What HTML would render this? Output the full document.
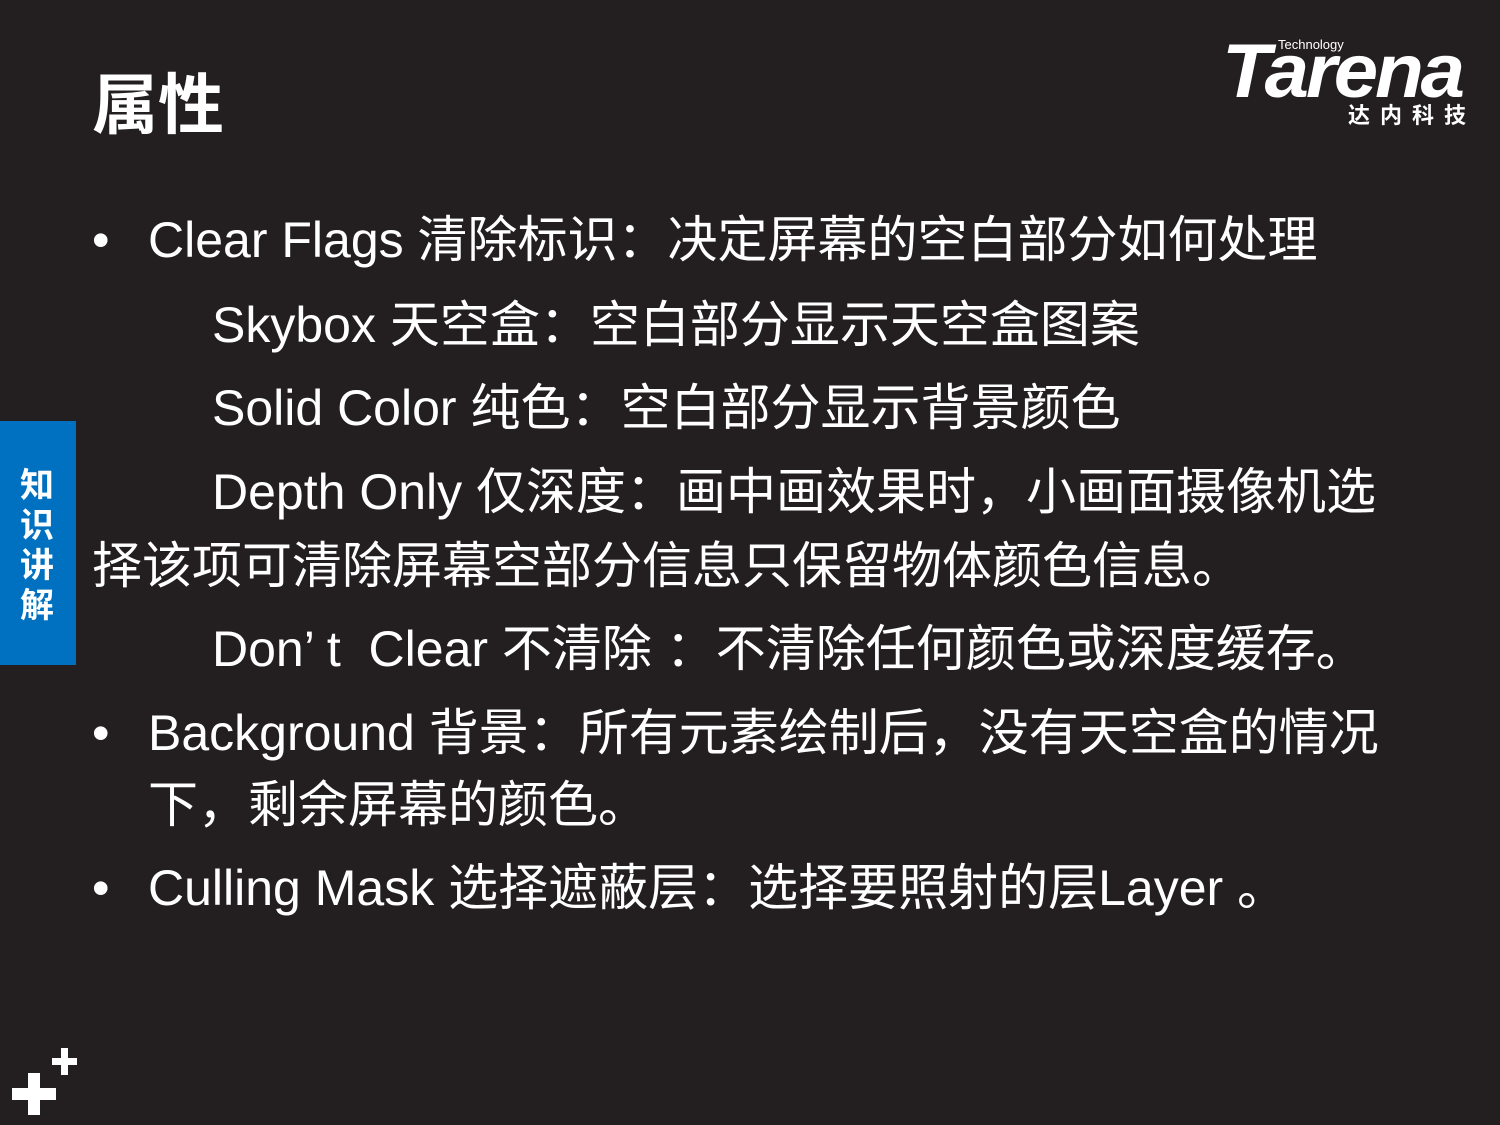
<!DOCTYPE html>
<html><head><meta charset="utf-8"><style>
body{margin:0;width:1500px;height:1125px;background:#231f20;overflow:hidden;position:relative;font-family:"Liberation Sans","Noto Sans CJK SC",sans-serif;color:#fff}
.l{position:absolute;font-size:50px;line-height:60px;white-space:nowrap}
.t{position:absolute;left:92px;top:52px;font-size:66px;font-weight:bold;font-family:"Noto Sans CJK SC",sans-serif}
.tab{position:absolute;left:0;top:421px;width:76px;height:244px;background:#0070c0}
.tab div{position:absolute;left:20px;top:42px;width:40px;font-size:34px;line-height:40px;font-weight:bold;font-family:"Noto Sans CJK SC",sans-serif}
</style></head><body>
<div class="t">属性</div>
<div style="position:absolute;left:1222px;top:30px;width:260px;white-space:nowrap">
<div style="position:absolute;left:56px;top:7px;font-size:13px">Technology</div>
<div style="position:absolute;left:0;top:12px;font-size:76px;font-weight:bold;font-style:italic;letter-spacing:-3px;line-height:60px;transform:scaleX(1.05);transform-origin:left">Tarena</div>
<div style="position:absolute;left:126px;top:68px;font-size:22px;font-weight:bold;letter-spacing:10px;font-family:'Noto Sans CJK SC',sans-serif">达内科技</div>
</div>
<div class="tab"><div>知识讲解</div></div>
<div class="l" style="left:92px;top:210px">•</div>
<div class="l" style="left:148px;top:210px">Clear Flags 清除标识：决定屏幕的空白部分如何处理</div>
<div class="l" style="left:212px;top:295px">Skybox 天空盒：空白部分显示天空盒图案</div>
<div class="l" style="left:212px;top:378px">Solid Color 纯色：空白部分显示背景颜色</div>
<div class="l" style="left:212px;top:462px">Depth Only 仅深度：画中画效果时，小画面摄像机选</div>
<div class="l" style="left:92px;top:536px">择该项可清除屏幕空部分信息只保留物体颜色信息。</div>
<div class="l" style="left:212px;top:619px">Don’ t&nbsp; Clear 不清除 ：不清除任何颜色或深度缓存。</div>
<div class="l" style="left:92px;top:703px">•</div>
<div class="l" style="left:148px;top:703px">Background 背景：所有元素绘制后，没有天空盒的情况</div>
<div class="l" style="left:148px;top:775px">下，剩余屏幕的颜色。</div>
<div class="l" style="left:92px;top:858px">•</div>
<div class="l" style="left:148px;top:858px">Culling Mask 选择遮蔽层：选择要照射的层Layer 。</div>
<svg style="position:absolute;left:0;top:1040px" width="90" height="80">
<path d="M28 33h12v15h16v12H40v15H28V60H12V48h16z" fill="#fff"/>
<path d="M61 8h7v10h9v7h-9v10h-7V25h-9v-7h9z" fill="#fff"/>
</svg>
</body></html>
